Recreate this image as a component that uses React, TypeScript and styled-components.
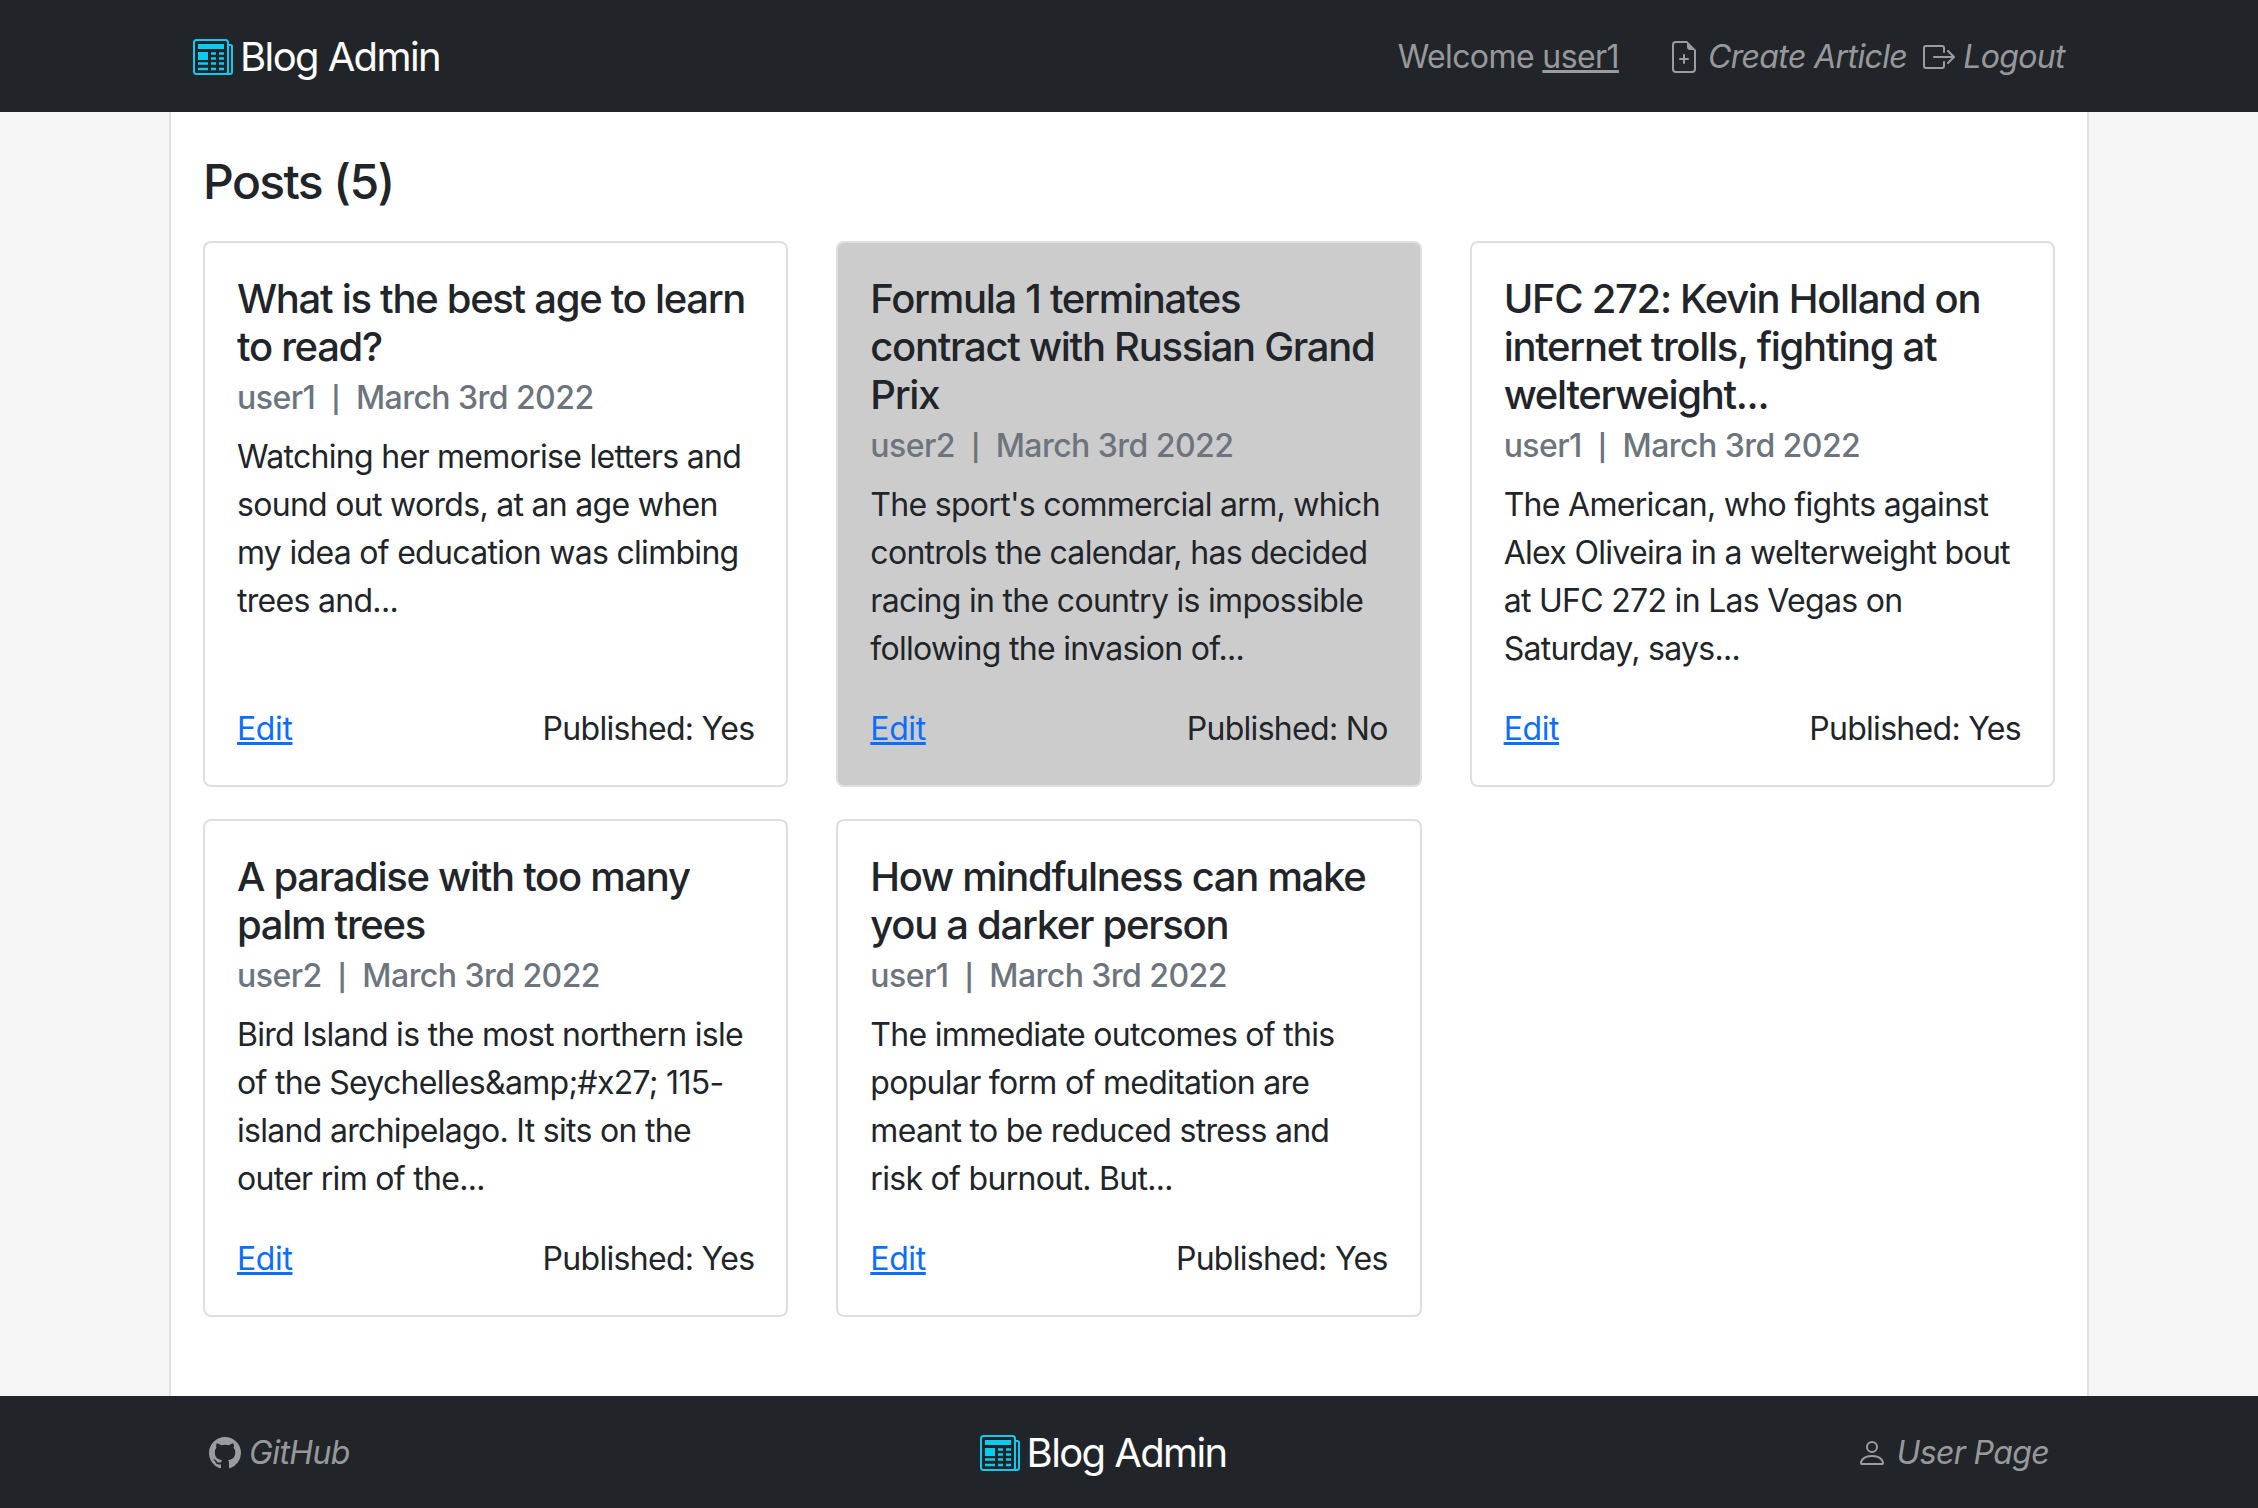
import React from "react";
import styled, { createGlobalStyle } from "styled-components";
import { BsFileEarmarkPlus, BsBoxArrowRight, BsGithub, BsPerson } from "react-icons/bs";

const Global = createGlobalStyle`
  html, body { margin: 0; padding: 0; }
  body {
    background: #f5f5f5;
    color: #212529;
    font-family: Inter, "Noto Sans", sans-serif;
    font-size: 32px;
    line-height: 48px;
    letter-spacing: -0.7px;
  }
  * { box-sizing: border-box; }
`;

const Page = styled.div`
  display: flex;
  flex-direction: column;
  height: 1508px;
  overflow: hidden;
`;

const Bar = styled.div`
  flex: none;
  height: 112px;
  background: #212529;
  display: flex;
  justify-content: center;
`;

const BarInner = styled.div<{ $pad: number }>`
  width: 1920px;
  padding: 2px ${(p) => p.$pad}px 0;
  display: flex;
  align-items: center;
  justify-content: space-between;
`;

const Brand = styled.div`
  display: flex;
  align-items: center;
  gap: 7px;
  color: #fff;
  font-size: 40px;
  letter-spacing: -1.6px;
`;

const NavGroup = styled.div`
  display: flex;
  align-items: center;
  color: rgba(255, 255, 255, 0.55);
`;

const Welcome = styled.span`
  margin-right: 49px;
  letter-spacing: -0.6px;
`;

const UserLink = styled.span`
  text-decoration: underline;
`;

const NavItem = styled.span<{ $ml?: number }>`
  display: inline-flex;
  align-items: center;
  gap: 8px;
  font-style: italic;
  letter-spacing: -0.62px;
  color: rgba(255, 255, 255, 0.55);
  margin-left: ${(p) => p.$ml ?? 0}px;
`;

const Main = styled.main`
  flex: 1;
  min-height: 0;
  width: 1920px;
  margin: 0 auto;
  background: #fff;
  border-left: 2px solid #dee2e6;
  border-right: 2px solid #dee2e6;
  padding: 34px 32px 0;
`;

const Heading = styled.h3`
  margin: 0 0 23px;
  font-size: 48px;
  line-height: 72px;
  font-weight: 500;
  letter-spacing: -1.6px;
`;

const Grid = styled.div`
  display: grid;
  grid-template-columns: repeat(3, 1fr);
  gap: 32px 48px;
`;

const Card = styled.article<{ $muted?: boolean }>`
  display: flex;
  flex-direction: column;
  padding: 32px;
  border: 2px solid ${(p) => (p.$muted ? "#dedede" : "#dfdfdf")};
  border-radius: 8px;
  background: ${(p) => (p.$muted ? "#cccccc" : "#fff")};
`;

const Title = styled.h5`
  margin: 0 0 8px;
  font-size: 40px;
  line-height: 48px;
  font-weight: 500;
  letter-spacing: -1.3px;
`;

const Meta = styled.h6`
  margin: 0 0 14px;
  font-size: 32px;
  line-height: 38px;
  font-weight: 500;
  color: #6c757d;
  letter-spacing: -0.55px;
`;

const Pipe = styled.span`
  font-size: 26px;
  font-weight: 600;
`;

const Text = styled.p`
  margin: 0 0 32px;
  flex: 1;
`;

const CardFoot = styled.div`
  display: flex;
  justify-content: space-between;
`;

const EditLink = styled.a`
  color: #0d6efd;
  text-decoration: underline;
  letter-spacing: -0.4px;
`;

const Logo = () => (
  <svg width="40" height="36" viewBox="0 0 40 36" fill="none" aria-hidden="true">
    <rect x="1" y="1" width="34" height="34" rx="2.5" stroke="#0dcaf0" strokeWidth="2" />
    <path d="M35 6h2.5A1.5 1.5 0 0 1 39 7.5V33a2 2 0 0 1-2 2h-3" stroke="#0dcaf0" strokeWidth="2" />
    <rect x="5" y="5" width="26" height="5" fill="#0dcaf0" />
    <rect x="5" y="13" width="10" height="8" fill="#0dcaf0" />
    <path d="M5 24.5h10M5 30h10M18 14.5h5M26 14.5h5M18 19.5h5M26 19.5h5M18 24.5h5M26 24.5h5M18 30h5M26 30h5" stroke="#0dcaf0" strokeWidth="2.4" />
  </svg>
);

const posts = [
  { t: "What is the best age to learn to read?", u: "user1", b: "Watching her memorise letters and sound out words, at an age when my idea of education was climbing trees and...", p: "Yes" },
  { t: "Formula 1 terminates contract with Russian Grand Prix", u: "user2", b: "The sport's commercial arm, which controls the calendar, has decided racing in the country is impossible following the invasion of...", p: "No" },
  { t: "UFC 272: Kevin Holland on internet trolls, fighting at welterweight...", u: "user1", b: "The American, who fights against Alex Oliveira in a welterweight bout at UFC 272 in Las Vegas on Saturday, says...", p: "Yes" },
  { t: "A paradise with too many palm trees", u: "user2", b: "Bird Island is the most northern isle of the Seychelles&amp;#x27; 115-island archipelago. It sits on the outer rim of the...", p: "Yes" },
  { t: "How mindfulness can make you a darker person", u: "user1", b: "The immediate outcomes of this popular form of meditation are meant to be reduced stress and risk of burnout. But...", p: "Yes" },
];

export default function App() {
  return (
    <Page>
      <Global />
      <Bar>
        <BarInner $pad={24}>
          <Brand><Logo />Blog Admin</Brand>
          <NavGroup>
            <Welcome>Welcome <UserLink>user1</UserLink></Welcome>
            <NavItem><BsFileEarmarkPlus size={32} />Create Article</NavItem>
            <NavItem $ml={16}><BsBoxArrowRight size={32} />Logout</NavItem>
          </NavGroup>
        </BarInner>
      </Bar>
      <Main>
        <Heading>Posts (5)</Heading>
        <Grid>
          {posts.map((p) => (
            <Card key={p.t} $muted={p.p === "No"}>
              <Title>{p.t}</Title>
              <Meta>{p.u}&nbsp; <Pipe>|</Pipe> &nbsp;March 3rd 2022</Meta>
              <Text>{p.b}</Text>
              <CardFoot>
                <EditLink href="#">Edit</EditLink>
                <span>Published: {p.p}</span>
              </CardFoot>
            </Card>
          ))}
        </Grid>
      </Main>
      <Bar>
        <BarInner $pad={40}>
          <NavItem><BsGithub size={32} />GitHub</NavItem>
          <Brand><Logo />Blog Admin</Brand>
          <NavItem><BsPerson size={32} />User Page</NavItem>
        </BarInner>
      </Bar>
    </Page>
  );
}
